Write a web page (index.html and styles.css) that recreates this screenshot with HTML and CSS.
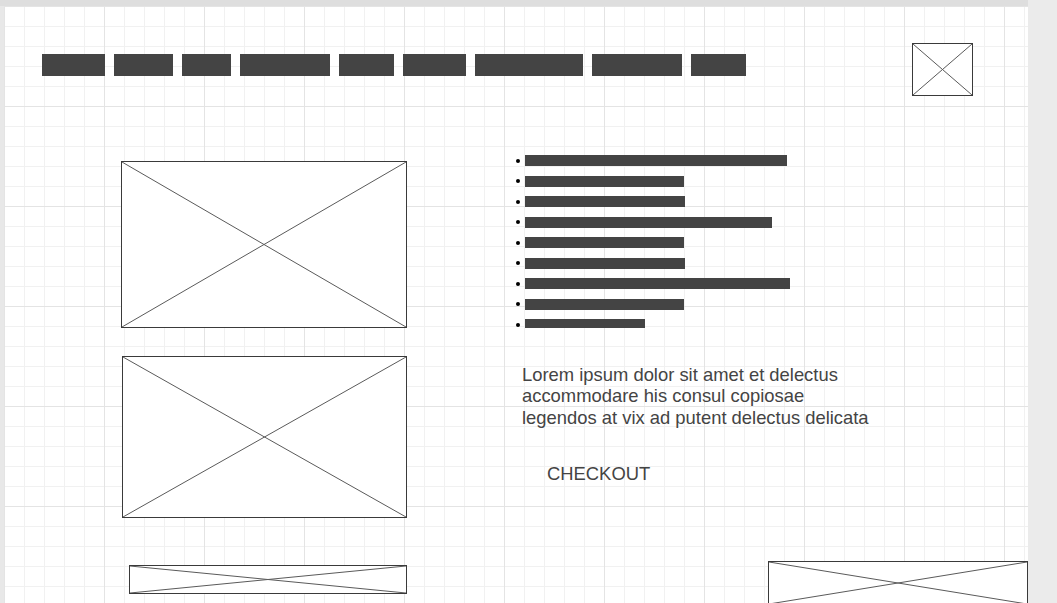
FILE: index.html
```html
<!DOCTYPE html>
<html lang="en">
<head>
    <meta charset="UTF-8">
    <meta name="viewport" content="width=device-width, initial-scale=1.0">
    <title>Product Page Wireframe</title>
    <link rel="stylesheet" href="styles.css">
</head>
<body>
    <div class="frame">
        <div class="canvas">
            <div class="header">
                <div class="nav">
                    <span class="nav-item" style="width: 63px"></span>
                    <span class="nav-item" style="width: 59px"></span>
                    <span class="nav-item" style="width: 49px"></span>
                    <span class="nav-item" style="width: 90px"></span>
                    <span class="nav-item" style="width: 55px"></span>
                    <span class="nav-item" style="width: 63px"></span>
                    <span class="nav-item" style="width: 108px"></span>
                    <span class="nav-item" style="width: 90px"></span>
                    <span class="nav-item" style="width: 55px"></span>
                </div>
                <div class="placeholder logo">
                    <svg viewBox="0 0 100 100" preserveAspectRatio="none"><line x1="0" y1="0" x2="100" y2="100"/><line x1="100" y1="0" x2="0" y2="100"/></svg>
                </div>
            </div>

            <div class="main">
                <div class="gallery">
                    <div class="placeholder photo-main">
                        <svg viewBox="0 0 100 100" preserveAspectRatio="none"><line x1="0" y1="0" x2="100" y2="100"/><line x1="100" y1="0" x2="0" y2="100"/></svg>
                    </div>
                    <div class="placeholder photo-second">
                        <svg viewBox="0 0 100 100" preserveAspectRatio="none"><line x1="0" y1="0" x2="100" y2="100"/><line x1="100" y1="0" x2="0" y2="100"/></svg>
                    </div>
                </div>

                <div class="details">
                    <ul class="features">
                        <li><span class="bar" style="width: 262px"></span></li>
                        <li><span class="bar" style="width: 159px"></span></li>
                        <li><span class="bar" style="width: 160px"></span></li>
                        <li><span class="bar" style="width: 247px"></span></li>
                        <li><span class="bar" style="width: 159px"></span></li>
                        <li><span class="bar" style="width: 160px"></span></li>
                        <li><span class="bar" style="width: 265px"></span></li>
                        <li><span class="bar" style="width: 159px"></span></li>
                        <li><span class="bar short" style="width: 120px"></span></li>
                    </ul>
                    <p class="description">Lorem ipsum dolor sit amet et delectus accommodare his consul copiosae legendos at vix ad putent delectus delicata</p>
                    <div class="checkout">CHECKOUT</div>
                </div>
            </div>

            <div class="bottom">
                <div class="placeholder banner">
                    <svg viewBox="0 0 100 100" preserveAspectRatio="none"><line x1="0" y1="0" x2="100" y2="100"/><line x1="100" y1="0" x2="0" y2="100"/></svg>
                </div>
                <div class="placeholder footer-box">
                    <svg viewBox="0 0 100 100" preserveAspectRatio="none"><line x1="0" y1="0" x2="100" y2="100"/><line x1="100" y1="0" x2="0" y2="100"/></svg>
                </div>
            </div>
        </div>
    </div>
</body>
</html>
```

FILE: styles.css
```css
html, body {
    margin: 0;
    height: 603px;
    overflow: hidden;
}

body {
    background-color: #ebebeb;
    font-family: "Liberation Sans", Arial, sans-serif;
    color: #444;
}

.frame {
    width: 1028px;
    height: 603px;
    box-sizing: border-box;
    border-top: 6px solid #dedede;
    padding-left: 4px;
    background-color: #e8e8e8;
}

.canvas {
    width: 1024px;
    height: 597px;
    overflow: hidden;
    background-color: #fff;
    background-image:
        linear-gradient(to right, #e4e4e4 1px, transparent 1px),
        linear-gradient(to bottom, #e4e4e4 1px, transparent 1px),
        linear-gradient(to right, #f1f1f1 1px, transparent 1px),
        linear-gradient(to bottom, #f1f1f1 1px, transparent 1px);
    background-size: 100px 100px, 100px 100px, 20px 20px, 20px 20px;
}

/* image placeholders */
.placeholder {
    box-sizing: border-box;
    border: 1px solid #3a3a3a;
    background-color: #fff;
    flex-shrink: 0;
}

.placeholder svg {
    display: block;
    width: 100%;
    height: 100%;
}

.placeholder line {
    stroke: #5a5a5a;
    stroke-width: 1;
    vector-effect: non-scaling-stroke;
}

/* header */
.header {
    display: flex;
    align-items: flex-start;
    padding-top: 37px;
}

.nav {
    display: flex;
    gap: 9px;
    margin-left: 38px;
    margin-top: 11px;
}

.nav-item {
    display: block;
    height: 22px;
    background-color: #444;
}

.logo {
    width: 61px;
    height: 53px;
    margin-left: auto;
    margin-right: 55px;
}

/* main */
.main {
    display: flex;
    align-items: flex-start;
    margin-top: 59px;
}

.gallery {
    margin-left: 117px;
    padding-top: 6px;
}

.photo-main {
    width: 286px;
    height: 167px;
}

.photo-second {
    width: 285px;
    height: 162px;
    margin-top: 28px;
    margin-left: 1px;
}

.details {
    margin-left: 109px;
}

.features {
    list-style: none;
    margin: 0;
    padding: 0;
}

.features li {
    display: flex;
    align-items: flex-start;
    height: 20.5px;
}

.features li::before {
    content: "";
    width: 4px;
    height: 4px;
    margin-top: 3.5px;
    margin-right: 5px;
    border-radius: 50%;
    background-color: #000;
}

.bar {
    display: block;
    height: 11px;
    background-color: #444;
}

.bar.short {
    height: 9px;
}

.description {
    width: 354px;
    margin: 24px 0 0 6px;
    font-size: 18.4px;
    line-height: 21.5px;
}

.checkout {
    margin: 35px 0 0 31px;
    font-size: 18.4px;
    line-height: 21.5px;
}

/* bottom row */
.bottom {
    display: flex;
    align-items: flex-start;
    margin-top: 43px;
}

.banner {
    width: 278px;
    height: 29px;
    margin-left: 125px;
    margin-top: 4px;
}

.footer-box {
    width: 260px;
    height: 44px;
    margin-left: auto;
}
```
